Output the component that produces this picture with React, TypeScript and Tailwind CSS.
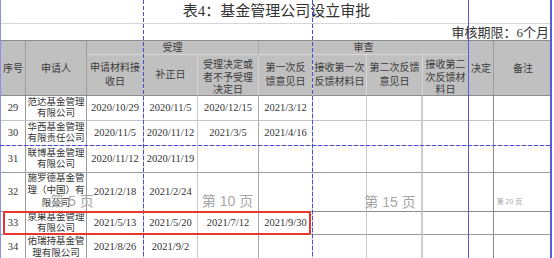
const SERIF = "font-['Liberation_Serif','Noto_Sans_CJK_SC',serif]";
const SANS = "font-['Liberation_Sans','Noto_Sans_CJK_SC',sans-serif]";

// right border colour per column (index = column)
const COL_BORDER = [
  'border-r-[#9c9c9c]',
  'border-r-[#9c9c9c]',
  'border-r-[#c8c8c8]',
  'border-r-[#c8c8c8]',
  'border-r-[#a8a8a8]',
  'border-r-[#c8c8c8]',
  'border-r-[#c8c8c8]',
  'border-r-2 border-r-[#cdcdcd]',
  'border-r-[#c8c8c8]',
  'border-r-[#8c8c8c]',
  'border-r-transparent',
];

type Row = { no: string; name: string[]; dates: string[]; line: string; lead: string };

const ROWS: Row[] = [
  { no: '29', name: ['范达基金管理', '有限公司'], dates: ['2020/10/29', '2020/11/5', '2020/12/15', '2021/3/12'], line: 'border-b-[#c4c4c4]', lead: 'leading-[11px]' },
  { no: '30', name: ['华西基金管理', '有限责任公司'], dates: ['2020/11/5', '2020/11/12', '2021/3/5', '2021/4/16'], line: 'border-b-[#c4c4c4]', lead: 'leading-[11px]' },
  { no: '31', name: ['联博基金管理', '有限公司'], dates: ['2020/11/12', '2020/11/19', '', ''], line: 'border-b-[#9c9c9c]', lead: 'leading-[11px]' },
  { no: '32', name: ['施罗德基金管', '理（中国）有', '限公司'], dates: ['2021/2/18', '2021/2/24', '', ''], line: 'border-b-[#8c8c8c]', lead: 'leading-[12.5px] pb-[3px]' },
  { no: '33', name: ['泉果基金管理', '有限公司'], dates: ['2021/5/13', '2021/5/20', '2021/7/12', '2021/9/30'], line: 'border-b-[#9c9c9c]', lead: 'leading-[11px]' },
  { no: '34', name: ['佑瑞持基金管', '理有限公司'], dates: ['2021/8/26', '2021/9/2', '', ''], line: 'border-b-[#9c9c9c]', lead: 'leading-[11.5px]' },
];

const SUB_HEADERS: string[][] = [
  ['申请材料接', '收日'],
  ['补正日'],
  ['受理决定或', '者不予受理', '决定日'],
  ['第一次反', '馈意见日'],
  ['接收第一次', '反馈材料日'],
  ['第二次反馈', '意见日'],
  ['接收第二', '次反馈材', '料日'],
];

function Lines({ lines }: { lines: string[] }) {
  return (
    <>
      {lines.map((l, i) => (
        <span key={i} className="block whitespace-nowrap">{l}</span>
      ))}
    </>
  );
}

export default function App() {
  const head = 'bg-[#c0c0c0] text-[#3a3a3a] text-[10px] flex items-center justify-center text-center overflow-hidden';

  return (
    <div className={`relative w-[554px] h-[258px] overflow-hidden bg-white ${SERIF}`}>
      <div className="pl-px w-[552px]">
        {/* title rows */}
        <div className="h-[24px] border-b border-[#d6d6d6] flex items-center justify-center text-[15px] leading-none text-[#333]">
          表4：基金管理公司设立审批
        </div>
        <div className="h-[17px] border-b border-[#8c8c8c] flex items-center justify-end pr-[3px] text-[13px] leading-none text-[#333]">
          审核期限：6个月
        </div>

        {/* table */}
        <div className="grid grid-cols-[25px_61px_57px_54px_61px_54px_54px_56px_46px_25px_58px] grid-rows-[14px_41px_25px_25px_27px_39px_23px_26px]">
          <div className={`${head} row-span-2 border-r border-r-[#9c9c9c] border-b border-b-[#8c8c8c]`}>序号</div>
          <div className={`${head} row-span-2 border-r border-r-[#9c9c9c] border-b border-b-[#8c8c8c]`}>申请人</div>
          <div className={`${head} col-span-3 border-r border-r-[#a8a8a8] border-b border-b-[#d8d8d8] leading-none`}>受理</div>
          <div className={`${head} col-span-4 border-r border-r-[#a8a8a8] border-b border-b-[#d8d8d8] leading-none`}>审查</div>
          <div className={`${head} row-span-2 border-r border-r-[#9c9c9c] border-b border-b-[#8c8c8c]`}>决定</div>
          <div className={`${head} row-span-2 border-b border-b-[#8c8c8c]`}>备注</div>
          {SUB_HEADERS.map((lines, i) => (
            <div
              key={i}
              className={`${head} border-r ${i === 0 ? 'border-r-[#c8c8c8]' : 'border-r-[#d6d6d6]'} border-b border-b-[#8c8c8c] ${
                lines.length > 2 ? 'items-start pt-[4px] leading-[12.5px]' : 'leading-[14px]'
              }`}
            >
              <div><Lines lines={lines} /></div>
            </div>
          ))}

          {ROWS.map((r) => {
            const cells = [r.no, r.name, ...r.dates, '', '', '', '', ''];
            return cells.map((c, ci) => (
              <div
                key={r.no + '-' + ci}
                className={`border-r ${COL_BORDER[ci]} border-b ${r.line} flex items-center justify-center text-center overflow-hidden text-[#333] ${
                  ci === 1 ? `text-[9.5px] ${r.lead}` : 'text-[10.5px] leading-none'
                }`}
              >
                {Array.isArray(c) ? <div><Lines lines={c} /></div> : c}
              </div>
            ));
          })}
        </div>
      </div>

      {/* page-break preview labels */}
      <div className={`absolute top-[194px] left-px w-[142px] text-center text-[14px] leading-[14px] text-[#a6a6a6] ${SANS}`}>第 5 页</div>
      <div className={`absolute top-[194px] left-[143px] w-[169px] text-center text-[14px] leading-[14px] text-[#a6a6a6] ${SANS}`}>第 10 页</div>
      <div className={`absolute top-[195px] left-[312px] w-[156px] text-center text-[14px] leading-[14px] text-[#a6a6a6] ${SANS}`}>第 15 页</div>
      <div className={`absolute top-[198px] left-[468px] w-[83px] text-center text-[7px] leading-[8px] text-[#a6a6a6] ${SANS}`}>第 20 页</div>

      {/* page-break lines */}
      <div className="absolute left-0 top-0 h-full w-px bg-[#8f8fe6]" />
      <div className="absolute left-[143px] top-0 h-full w-px bg-[repeating-linear-gradient(to_bottom,#4b4bd2_0px,#4b4bd2_4px,transparent_4px,transparent_6px)]" />
      <div className="absolute left-[312px] top-0 h-full w-px bg-[repeating-linear-gradient(to_bottom,#4b4bd2_0px,#4b4bd2_4px,transparent_4px,transparent_6px)]" />
      <div className="absolute left-[468px] top-0 h-full w-px bg-[#5a5ade]" />
      <div className="absolute left-[550px] top-0 h-full w-[2px] bg-[#5a5ade]" />
      <div className="absolute left-0 top-[145px] w-[552px] h-px bg-[repeating-linear-gradient(to_right,#4b4bd2_0px,#4b4bd2_4px,transparent_4px,transparent_6px)]" />

      {/* highlight */}
      <div className="absolute left-[3px] top-[211px] w-[308px] h-[24px] border-2 border-[#e8352f] rounded-[2px]" />
    </div>
  );
}
